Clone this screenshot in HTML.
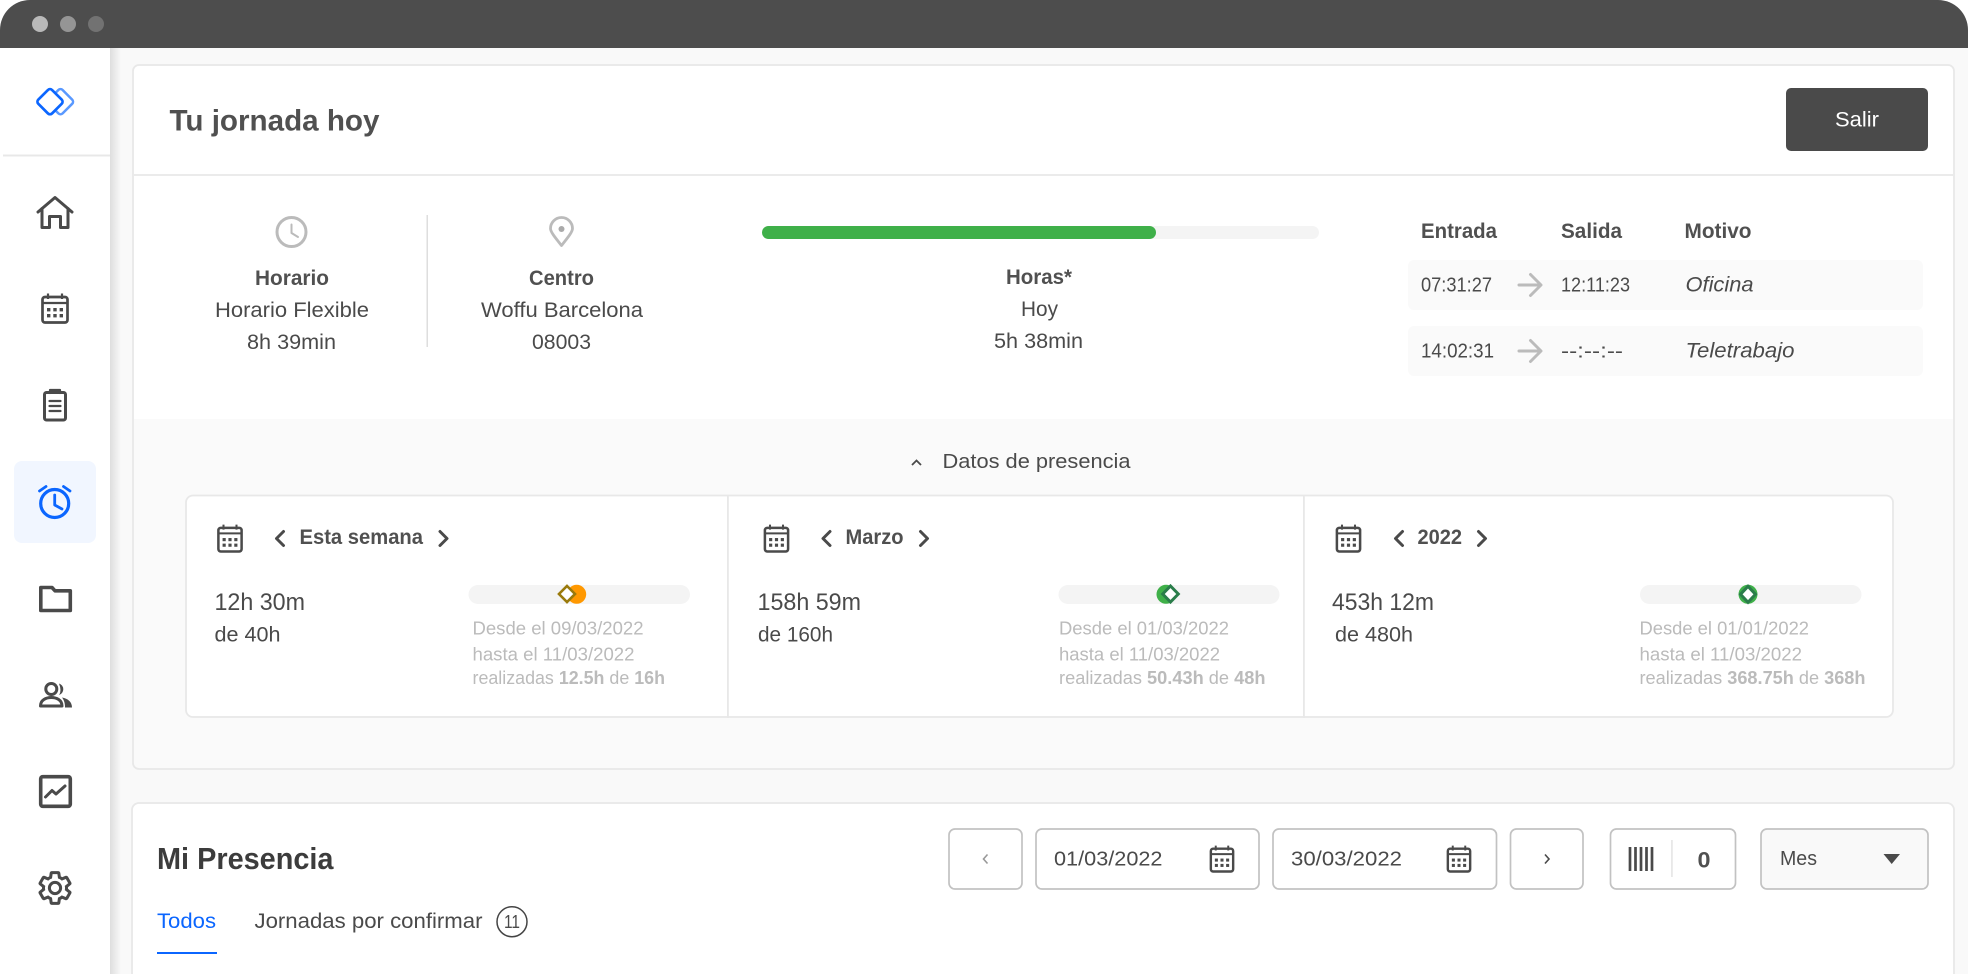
<!DOCTYPE html>
<html lang="es"><head><meta charset="utf-8"><title>Tu jornada hoy</title>
<style>
html,body{margin:0;padding:0;width:1968px;height:974px;overflow:hidden;background:#fff}
svg{display:block}
text{font-family:"Liberation Sans",sans-serif;fill:#4a4a4a;font-size:21px;white-space:pre}
.b{font-weight:700;fill:#505050}
.i{font-style:italic}
.g{fill:#bbb;font-size:18.5px}
.gb{font-weight:700;fill:#bbb}
.ic{fill:none;stroke:#4a4a4a;stroke-width:3;stroke-linecap:round;stroke-linejoin:round}
</style></head><body>
<svg width="1968" height="974" viewBox="0 0 1968 974" xmlns="http://www.w3.org/2000/svg">
<defs>
<linearGradient id="sh" x1="0" x2="1" y1="0" y2="0"><stop offset="0" stop-color="#dedede"/><stop offset="1" stop-color="#f9f9f9"/></linearGradient>
<symbol id="cal" viewBox="0 0 28 31">
<rect x="1.500" y="4" width="25" height="25.500" rx="2.500" fill="none" stroke="#4a4a4a" stroke-width="2.700"/>
<path d="M7 .5V6M21 .5V6M2 10H26" fill="none" stroke="#4a4a4a" stroke-width="2.200"/>
<g fill="#4a4a4a"><rect x="6" y="15" width="3.400" height="3.400"/><rect x="12.300" y="15" width="3.400" height="3.400"/><rect x="18.600" y="15" width="3.400" height="3.400"/><rect x="6" y="21" width="3.400" height="3.400"/><rect x="12.300" y="21" width="3.400" height="3.400"/><rect x="18.600" y="21" width="3.400" height="3.400"/></g>
</symbol>
</defs>
<rect width="1968" height="974" fill="#fff"/>
<rect x="110" y="48" width="1858" height="926" fill="#f9f9f9"/>
<rect x="110" y="48" width="11" height="926" fill="url(#sh)"/>
<path d="M0 48V30A30 30 0 0 1 30 0H1938A30 30 0 0 1 1968 30V48Z" fill="#4d4d4d"/>
<circle cx="40" cy="24" r="8" fill="#b9b9b9"/><circle cx="68" cy="24" r="8" fill="#959595"/><circle cx="96" cy="24" r="8" fill="#727272"/>

<!-- sidebar -->
<rect x="3" y="154.500" width="107" height="2" fill="#e8e8e8"/>
<rect x="50.750" y="91.950" width="19.500" height="19.500" rx="3" transform="rotate(45 60.500 101.700)" fill="#fff" stroke="#5a99ff" stroke-width="2.500"/>
<rect x="40.250" y="91.950" width="19.500" height="19.500" rx="3" transform="rotate(45 50 101.700)" fill="#fff" stroke="#0b66ff" stroke-width="2.700"/>
<path class="ic" d="M38 212L55 197.500L72 212M42 208.500V227.500H49.500V216.500H60.500V227.500H68V208.500"/>
<use href="#cal" x="41" y="293" width="28" height="31"/>
<g class="ic"><rect x="44.500" y="392.500" width="21" height="27.500" rx="2"/><path stroke-width="2.200" d="M50 393V390H60V393M49.500 401H60.500M49.500 406H60.500M49.500 411H60.500"/></g>
<rect x="14" y="461" width="82" height="82" rx="8" fill="#f1f6ff"/>
<g fill="none" stroke="#0b66ff" stroke-width="3.200" stroke-linecap="round" stroke-linejoin="round"><circle cx="54.700" cy="503.500" r="14"/><path d="M54.700 495V505L62 509" stroke-width="2.800"/><path d="M39.500 491L46 486.500M70 491L63.500 486.500" stroke-width="2.800"/></g>
<path d="M40.800 610.500V587.500H52L55 590.800H70.300V610.500Z" fill="none" stroke="#4a4a4a" stroke-width="3.600" stroke-linejoin="round"/>
<g><circle cx="51.300" cy="689" r="5.500" class="ic"/><path class="ic" d="M40.500 706C40.500 700 46 697.500 51.300 697.500S62 700 62 706Z"/><path d="M59 683.500A6 6 0 0 1 59 695Q62 691 59 683.500ZM62 697.500C68 698.500 72 702 72 707.500H65C65 703 64 700 62 697.500Z" fill="#4a4a4a"/></g>
<g><rect x="40.700" y="776.700" width="29.600" height="29.600" rx="2" fill="none" stroke="#4a4a4a" stroke-width="3.600"/><path class="ic" stroke-width="2.200" d="M45.500 797L52 790.500L56 794L65 786"/></g>
<g transform="translate(35.800 868.800) scale(1.6)"><path fill="none" stroke="#4a4a4a" stroke-width="1.900" d="M19.140 12.940c.04-.3.06-.61.06-.94 0-.32-.02-.64-.07-.94l2.030-1.580c.18-.14.23-.41.12-.61l-1.920-3.320c-.12-.22-.37-.29-.59-.22l-2.390.96c-.5-.38-1.030-.7-1.620-.94l-.36-2.540c-.04-.24-.24-.41-.48-.41h-3.840c-.24 0-.43.17-.47.41l-.36 2.540c-.59.24-1.130.57-1.620.94l-2.390-.96c-.22-.08-.47 0-.59.22L2.740 8.870c-.12.21-.08.47.12.61l2.030 1.580c-.05.3-.09.63-.09.94s.02.64.07.94l-2.030 1.580c-.18.14-.23.41-.12.61l1.920 3.320c.12.22.37.29.59.22l2.390-.96c.5.38 1.030.7 1.620.94l.36 2.540c.05.24.24.41.48.41h3.840c.24 0 .44-.17.47-.41l.36-2.540c.59-.24 1.130-.56 1.620-.94l2.390.96c.22.08.47 0 .59-.22l1.920-3.320c.12-.22.07-.47-.12-.61l-2.010-1.580z"/><circle cx="12" cy="12" r="3.500" fill="none" stroke="#4a4a4a" stroke-width="1.900"/></g>

<!-- card 1 -->
<rect x="133" y="65" width="1821" height="704" rx="6" fill="#fafafa" stroke="#e8e8e8" stroke-width="1.800"/>
<path d="M134 419V71A5 5 0 0 1 139 66H1948A5 5 0 0 1 1953 71V419Z" fill="#fff"/>
<rect x="134" y="174" width="1819" height="2" fill="#ebebeb"/>
<text x="169.500" y="130.500" class="b" style="font-size:30px;fill:#505050" textLength="210" lengthAdjust="spacingAndGlyphs">Tu jornada hoy</text>
<rect x="1786" y="88" width="142" height="63" rx="5" fill="#4a4a4a"/>
<text x="1835" y="126.500" style="fill:#fff" textLength="44" lengthAdjust="spacingAndGlyphs">Salir</text>

<g fill="none" stroke="#bbb" stroke-width="3" stroke-linecap="round" stroke-linejoin="round"><circle cx="291.500" cy="232" r="14.500"/><path stroke-width="2" d="M291.500 224.500V233L298 237"/>
<path stroke-width="2.800" d="M561.500 245.500C555.500 238 550.500 232 550.500 228.500A11 11 0 0 1 572.500 228.500C572.500 232 567.500 238 561.500 245.500Z"/></g>
<circle cx="561.500" cy="229" r="3" fill="#aaa"/>
<rect x="426.500" y="215" width="1.500" height="132" fill="#dedede"/>
<text x="255" y="285" class="b" textLength="74" lengthAdjust="spacingAndGlyphs">Horario</text>
<text x="215" y="317" textLength="154" lengthAdjust="spacingAndGlyphs">Horario Flexible</text>
<text x="247" y="349" textLength="89" lengthAdjust="spacingAndGlyphs">8h 39min</text>
<text x="529" y="285" class="b" textLength="65" lengthAdjust="spacingAndGlyphs">Centro</text>
<text x="481" y="317" textLength="162" lengthAdjust="spacingAndGlyphs">Woffu Barcelona</text>
<text x="532" y="349" textLength="59" lengthAdjust="spacingAndGlyphs">08003</text>

<rect x="762" y="226" width="557" height="13" rx="6.500" fill="#f4f4f4"/>
<rect x="762" y="226" width="394" height="13" rx="6.500" fill="#3fb049"/>
<text x="1006" y="284" class="b" textLength="66" lengthAdjust="spacingAndGlyphs">Horas*</text>
<text x="1021" y="316" textLength="37" lengthAdjust="spacingAndGlyphs">Hoy</text>
<text x="994" y="348" textLength="89" lengthAdjust="spacingAndGlyphs">5h 38min</text>

<text x="1421" y="238" class="b" textLength="76" lengthAdjust="spacingAndGlyphs">Entrada</text>
<text x="1561" y="238" class="b" textLength="61" lengthAdjust="spacingAndGlyphs">Salida</text>
<text x="1684.500" y="238" class="b" textLength="67" lengthAdjust="spacingAndGlyphs">Motivo</text>
<rect x="1408" y="260" width="515" height="50" rx="6" fill="#fafafa"/>
<rect x="1408" y="326" width="515" height="50" rx="6" fill="#fafafa"/>
<text x="1421" y="291.500" style="font-size:20px" textLength="71" lengthAdjust="spacingAndGlyphs">07:31:27</text>
<text x="1561" y="291.500" style="font-size:20px" textLength="69" lengthAdjust="spacingAndGlyphs">12:11:23</text>
<text x="1685.500" y="291.500" class="i" textLength="68" lengthAdjust="spacingAndGlyphs">Oficina</text>
<text x="1421" y="357.500" style="font-size:20px" textLength="73" lengthAdjust="spacingAndGlyphs">14:02:31</text>
<text x="1561" y="357.500" style="font-size:20px" textLength="62" lengthAdjust="spacingAndGlyphs">--:--:--</text>
<text x="1685.500" y="357.500" class="i" textLength="109" lengthAdjust="spacingAndGlyphs">Teletrabajo</text>
<g fill="none" stroke="#bbb" stroke-width="3" stroke-linecap="round" stroke-linejoin="round"><path d="M1519 285H1540M1530.500 274.500L1541 285L1530.500 295.500"/><path d="M1519 351H1540M1530.500 340.500L1541 351L1530.500 361.500"/></g>

<path d="M912 465L916.500 460.500L921 465" fill="none" stroke="#4a4a4a" stroke-width="1.800"/>
<text x="942.500" y="468" style="font-size:20.500px" textLength="188" lengthAdjust="spacingAndGlyphs">Datos de presencia</text>

<rect x="186" y="495.500" width="1707" height="221.500" rx="7" fill="#fff" stroke="#e8e8e8" stroke-width="1.800"/>
<rect x="727" y="495" width="1.800" height="223" fill="#e8e8e8"/><rect x="1303" y="495" width="1.800" height="223" fill="#e8e8e8"/>

<!-- period 1 -->
<use href="#cal" x="217" y="524" width="26" height="29"/>
<path class="ic" d="M283.500 531.500L276.500 538.500L283.500 545.500M440 531.500L447 538.500L440 545.500"/>
<text x="299.500" y="544" class="b" textLength="123.500" lengthAdjust="spacingAndGlyphs">Esta semana</text>
<text x="214.500" y="610" style="font-size:24.500px" textLength="90.500" lengthAdjust="spacingAndGlyphs">12h 30m</text>
<text x="214.500" y="641.500" textLength="66" lengthAdjust="spacingAndGlyphs">de 40h</text>
<rect x="468.500" y="585" width="221.500" height="19" rx="9.500" fill="#f4f4f4"/>
<circle cx="576.700" cy="594.300" r="9.500" fill="#ff9800"/>
<path d="M567 586L575 594L567 602L559 594Z" fill="#fff" stroke="#9a7a0b" stroke-width="2.600"/>
<text x="472.500" y="634.500" class="g" textLength="171" lengthAdjust="spacingAndGlyphs">Desde el 09/03/2022</text>
<text x="472.500" y="660.500" class="g" textLength="162" lengthAdjust="spacingAndGlyphs">hasta el 11/03/2022</text>
<text x="472.500" y="684" class="g" textLength="192.500" lengthAdjust="spacingAndGlyphs">realizadas <tspan class="gb">12.5h</tspan> de <tspan class="gb">16h</tspan></text>

<!-- period 2 -->
<use href="#cal" x="763.500" y="524" width="26" height="29"/>
<path class="ic" d="M830 531.500L823 538.500L830 545.500M920.500 531.500L927.500 538.500L920.500 545.500"/>
<text x="845.500" y="544" class="b" textLength="58" lengthAdjust="spacingAndGlyphs">Marzo</text>
<text x="757.500" y="610" style="font-size:24.500px" textLength="103.500" lengthAdjust="spacingAndGlyphs">158h 59m</text>
<text x="758" y="641.500" textLength="75" lengthAdjust="spacingAndGlyphs">de 160h</text>
<rect x="1058.500" y="585" width="221" height="19" rx="9.500" fill="#f4f4f4"/>
<circle cx="1166" cy="594.300" r="9.500" fill="#3fb049"/>
<path d="M1170.500 586L1178.300 594L1170.500 602L1162.700 594Z" fill="#fff" stroke="#2a7d4a" stroke-width="3"/>
<text x="1059" y="634.500" class="g" textLength="170" lengthAdjust="spacingAndGlyphs">Desde el 01/03/2022</text>
<text x="1059" y="660.500" class="g" textLength="161" lengthAdjust="spacingAndGlyphs">hasta el 11/03/2022</text>
<text x="1059" y="684" class="g" textLength="206.500" lengthAdjust="spacingAndGlyphs">realizadas <tspan class="gb">50.43h</tspan> de <tspan class="gb">48h</tspan></text>

<!-- period 3 -->
<use href="#cal" x="1335.500" y="524" width="26" height="29"/>
<path class="ic" d="M1402.500 531.500L1395.500 538.500L1402.500 545.500M1478.500 531.500L1485.500 538.500L1478.500 545.500"/>
<text x="1417.500" y="544" class="b" textLength="44.500" lengthAdjust="spacingAndGlyphs">2022</text>
<text x="1332" y="610" style="font-size:24.500px" textLength="102" lengthAdjust="spacingAndGlyphs">453h 12m</text>
<text x="1335" y="641.500" textLength="78" lengthAdjust="spacingAndGlyphs">de 480h</text>
<rect x="1640" y="585" width="221.500" height="19" rx="9.500" fill="#f4f4f4"/>
<circle cx="1748" cy="594.300" r="9.500" fill="#3fb049"/>
<path d="M1748 586.300L1755.500 594.300L1748 602.300L1740.500 594.300Z" fill="#fff" stroke="#2a7d4a" stroke-width="3"/>
<text x="1639.500" y="634.500" class="g" textLength="169.500" lengthAdjust="spacingAndGlyphs">Desde el 01/01/2022</text>
<text x="1639.500" y="660.500" class="g" textLength="162.500" lengthAdjust="spacingAndGlyphs">hasta el 11/03/2022</text>
<text x="1639.500" y="684" class="g" textLength="226" lengthAdjust="spacingAndGlyphs">realizadas <tspan class="gb">368.75h</tspan> de <tspan class="gb">368h</tspan></text>

<!-- card 2 -->
<rect x="132" y="803" width="1822" height="190" rx="7" fill="#fff" stroke="#e8e8e8" stroke-width="1.800"/>
<text x="157" y="869" class="b" style="font-size:30.500px;fill:#3c3c3c" textLength="176.500" lengthAdjust="spacingAndGlyphs">Mi Presencia</text>
<text x="157" y="928" style="font-size:21.500px;fill:#0b66ff" textLength="59" lengthAdjust="spacingAndGlyphs">Todos</text>
<rect x="157" y="952" width="60" height="2" fill="#0b66ff"/>
<text x="254.500" y="928" style="font-size:21.500px" textLength="228" lengthAdjust="spacingAndGlyphs">Jornadas por confirmar</text>
<circle cx="512" cy="921.700" r="15" fill="none" stroke="#444" stroke-width="1.500"/>
<text x="504" y="928" style="font-size:18px" textLength="16" lengthAdjust="spacingAndGlyphs">11</text>

<g fill="#fff" stroke="#c2c2c2" stroke-width="1.700">
<rect x="949" y="829" width="73" height="60" rx="6"/>
<rect x="1036" y="829" width="223" height="60" rx="6"/>
<rect x="1273" y="829" width="223.500" height="60" rx="6"/>
<rect x="1510.500" y="829" width="72.500" height="60" rx="6"/>
<rect x="1610.500" y="829" width="125" height="60" rx="6"/>
<rect x="1761" y="829" width="167" height="60" rx="6" fill="#f9f9f9"/>
</g>
<path d="M987.500 854.500L983.500 859L987.500 863.500" fill="none" stroke="#999" stroke-width="1.600"/>
<path d="M1545 854.500L1549 859L1545 863.500" fill="none" stroke="#4a4a4a" stroke-width="1.600"/>
<text x="1054" y="865.500" style="font-size:20.500px" textLength="108.500" lengthAdjust="spacingAndGlyphs">01/03/2022</text>
<use href="#cal" x="1209.500" y="845" width="25" height="28"/>
<text x="1291" y="865.500" style="font-size:20.500px" textLength="111" lengthAdjust="spacingAndGlyphs">30/03/2022</text>
<use href="#cal" x="1446.500" y="845" width="25" height="28"/>
<path d="M1630 847V871M1635.500 847V871M1641 847V871M1646.500 847V871M1652 847V871" stroke="#4a4a4a" stroke-width="2.700" fill="none"/>
<rect x="1671" y="840" width="1.800" height="37" fill="#e8e8e8"/>
<text x="1697.500" y="867.500" class="b" style="font-size:22px" textLength="13" lengthAdjust="spacingAndGlyphs">0</text>
<text x="1780" y="865" style="font-size:20.500px" textLength="37" lengthAdjust="spacingAndGlyphs">Mes</text>
<path d="M1883.500 854H1900L1891.700 864Z" fill="#4a4a4a"/>
</svg>
</body></html>
